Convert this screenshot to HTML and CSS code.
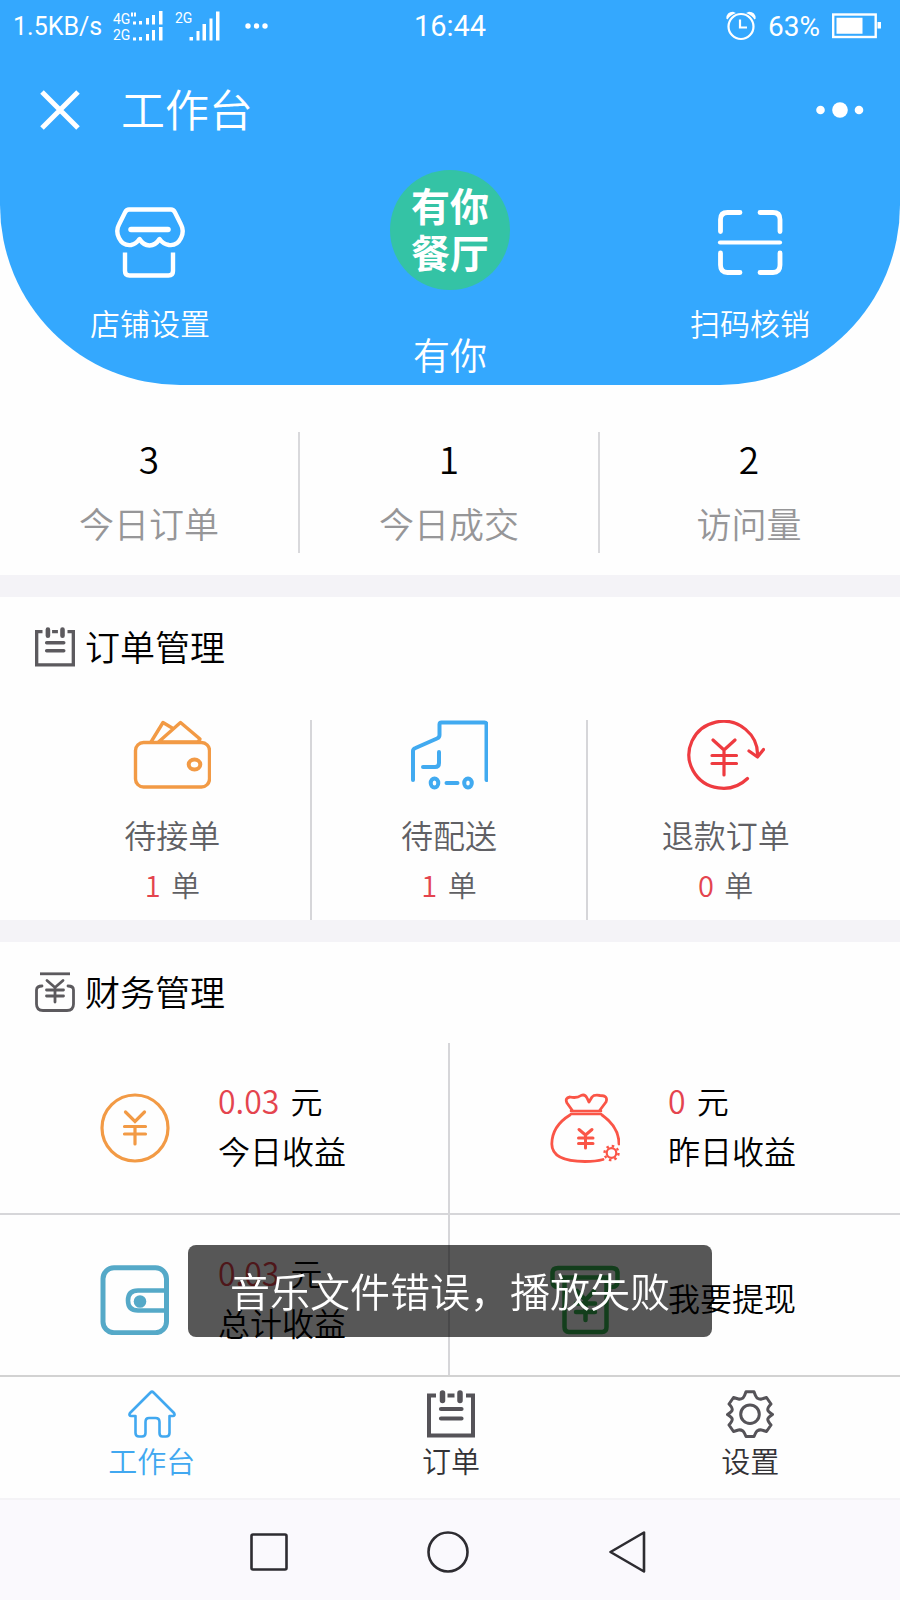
FILE: index.html
```html
<!DOCTYPE html>
<html lang="zh-CN">
<head>
<meta charset="utf-8">
<meta name="viewport" content="width=device-width, initial-scale=1">
<title>工作台</title>
<link rel="stylesheet" href="styles.css">
</head>
<body class="app">
<svg class="defs" width="0" height="0" aria-hidden="true">
  <symbol id="i-clipboard" viewBox="0 0 48 48">
    <g fill="none" stroke="currentColor" stroke-width="4">
      <path d="M9 5.500H2V45.500H46V5.500H39M20.500 5.500h7"/>
      <path d="M15.500 3v7.500M33 3v7.500" stroke-width="5.500" stroke-linecap="round"/>
      <path d="M14 19h20.500M14 28.500h20.500" stroke-width="4.200" stroke-linecap="round"/>
    </g>
  </symbol>
</svg>

<main class="page">
  <header class="hero">
    <div class="status">
      <div class="status-side">
        <span class="speed">1.5KB/s</span>
        <svg class="signal-dual" viewBox="0 0 50 32" aria-hidden="true">
          <g fill="#fff"><text class="net" x="0" y="14">4G</text><text class="net" x="0" y="30">2G</text>
          <path d="M20 11.500h3v3h-3zM26 11h3v3.500h-3zM33 8h3v6.500h-3zM39 5h3v9.500h-3zM46 1h3.500v13.500H46zM20 27.500h3v3h-3zM26 27h3v3.500h-3zM33 24h3v6.500h-3zM39 20h3v10.500h-3zM46 17h3.500v13.500H46zM18 2.500h2v4h-2zM21 2.500h2v4h-2z"/></g>
        </svg>
        <svg class="signal" viewBox="0 0 46 32" aria-hidden="true">
          <g fill="#fff"><text class="net" x="0" y="13">2G</text>
          <path d="M14.500 27h3.500v3.500h-3.500zM21.500 21h3v9.500h-3zM27.500 14h3.500v16.500h-3.500zM34.500 8.500h3v22h-3zM41 1.500h3.500v29H41z"/></g>
        </svg>
        <svg class="dots" viewBox="0 0 24 8" aria-hidden="true"><g fill="#fff"><circle cx="3" cy="4" r="2.700"/><circle cx="11.500" cy="4" r="2.700"/><circle cx="20" cy="4" r="2.700"/></g></svg>
      </div>
      <span class="clock">16:44</span>
      <div class="status-side status-right">
        <svg class="alarm" viewBox="0 0 30 30" aria-hidden="true">
          <g fill="none" stroke="#fff" stroke-width="2.200"><circle cx="15" cy="15.500" r="12.500"/><path d="M14 8.500v8h7"/></g>
          <path d="M.3 7.500Q.5 1 7 .8L10 2Q4 4 1.500 8.500zM29.700 7.500Q29.500 1 23 .8L20 2Q26 4 28.500 8.500z" fill="#fff"/>
        </svg>
        <span class="percent">63%</span>
        <svg class="battery" viewBox="0 0 50 26" aria-hidden="true">
          <rect x="1.200" y="1.500" width="42.500" height="22.500" fill="none" stroke="#fff" stroke-width="2.400"/>
          <path d="M4.500 4.700h26v16h-26zM45.500 9h3.500v6.500h-3.500z" fill="#fff"/>
        </svg>
      </div>
    </div>

    <div class="titlebar">
      <button class="icon-btn" type="button" aria-label="关闭">
        <svg class="close" viewBox="0 0 40 40"><path d="M2 2l36 36M38 2l-36 36" stroke="#fff" stroke-width="5" fill="none"/></svg>
      </button>
      <h1 class="title">工作台</h1>
      <button class="icon-btn more-btn" type="button" aria-label="更多">
        <svg class="more" viewBox="0 0 48 16"><g fill="#fff"><circle cx="4.500" cy="8" r="4.300"/><circle cx="24" cy="8" r="7.800"/><circle cx="43" cy="8" r="4.300"/></g></svg>
      </button>
    </div>

    <div class="hero-row">
      <a class="hero-link" href="#shop">
        <svg class="hero-icon" viewBox="0 0 74 74" fill="none" stroke="#fff" stroke-width="4.400" stroke-linecap="round" stroke-linejoin="round">
          <path d="M16 4.500H58Q60.500 4.500 62 7.500L68 19.500Q71.500 26 68 33Q64 41 56 40Q50 39 46.500 34Q42.500 40.500 36.500 40.500Q30.500 40.500 26.500 34Q23 39 18 40Q10 41 6 33Q2.500 26 6 19.500L12 7.500Q13.500 4.500 16 4.500Z"/>
          <path d="M18 24.500H55" stroke-width="5.500"/>
          <path d="M12 47.500V66Q12 70.500 16.500 70.500H55.500Q60 70.500 60 66V47.500" stroke-linecap="butt"/>
        </svg>
        <span class="hero-label">店铺设置</span>
      </a>
      <div class="shop">
        <div class="avatar">有你<br>餐厅</div>
        <div class="shop-name">有你</div>
      </div>
      <a class="hero-link" href="#scan">
        <svg class="hero-icon" viewBox="0 0 74 74" fill="none" stroke="#fff" stroke-width="4.800" stroke-linecap="round" stroke-linejoin="round">
          <path d="M7.500 26.500V14.500Q7.500 7.500 14.500 7.500H27M47 7.500H60Q67 7.500 67 14.500V26.500M7.500 48V60Q7.500 67.500 14.500 67.500H27M47 67.500H60Q67 67.500 67 60V48"/>
          <path d="M7 37.500H67" stroke-width="4.200"/>
        </svg>
        <span class="hero-label">扫码核销</span>
      </a>
    </div>
  </header>

  <section class="stats">
    <div class="stat"><span class="stat-num">3</span><span class="stat-label">今日订单</span></div>
    <div class="stat"><span class="stat-num">1</span><span class="stat-label">今日成交</span></div>
    <div class="stat"><span class="stat-num">2</span><span class="stat-label">访问量</span></div>
  </section>

  <section class="block">
    <h2 class="block-title"><svg class="block-icon"><use href="#i-clipboard"/></svg>订单管理</h2>
    <div class="orders">
      <a class="order" href="#accept">
        <svg class="order-icon" viewBox="0 0 78 70" fill="none" stroke="#f29a45" stroke-width="3.400" stroke-linejoin="round">
          <rect x="2.500" y="22.500" width="74" height="44.500" rx="8"/>
          <path d="M18 22L30 2.500L40 8.500M25.500 22L47.500 2.500L67 19L65 22M25.500 22H65"/>
          <ellipse cx="61.500" cy="44.500" rx="5.800" ry="5" stroke-width="4"/>
        </svg>
        <span class="order-label">待接单</span>
        <span class="order-count"><b class="num">1</b> 单</span>
      </a>
      <a class="order" href="#delivery">
        <svg class="order-icon" viewBox="0 0 78 70" fill="none" stroke="#41aaf0" stroke-width="4" stroke-linejoin="round" stroke-linecap="round">
          <path d="M3 60V31Q3 29 5.500 28L27 18.500Q29.500 17.500 29.500 15V4.500Q29.500 2.500 31.500 2.500H74.500Q76.500 2.500 76.500 4.500V60"/>
          <path d="M29 32V43Q29 47 25 47H13M36.500 63H47.500"/>
          <ellipse cx="24.500" cy="63" rx="3.800" ry="4.500"/><ellipse cx="58" cy="63" rx="3.800" ry="4.500"/>
        </svg>
        <span class="order-label">待配送</span>
        <span class="order-count"><b class="num">1</b> 单</span>
      </a>
      <a class="order" href="#refund">
        <svg class="order-icon" viewBox="0 0 78 70" fill="none" stroke="#ee3b40" stroke-width="3.200" stroke-linecap="round" stroke-linejoin="round">
          <path d="M60.500 58.500A34.300 33.500 0 1 1 70.500 37M62 31L70.500 37L76.500 29.500"/>
          <path d="M26 20L37 30L48 20M37 30V55M25 35.500H49.500M25 43.500H49.500"/>
        </svg>
        <span class="order-label">退款订单</span>
        <span class="order-count"><b class="num">0</b> 单</span>
      </a>
    </div>
  </section>

  <section class="block">
    <h2 class="block-title">
      <svg class="block-icon" viewBox="0 0 40 40" fill="none" stroke="#5c5a5e" stroke-width="2.800" stroke-linecap="round">
        <path d="M5 1.800H35" stroke-linecap="butt"/>
        <path d="M7 14Q1.500 14 1.500 18V32Q1.500 38.500 8 38.500H32Q38.500 38.500 38.500 32V18Q38.500 14 33 14"/>
        <path d="M12 8.500L20 15.500L28 8.500M20 15.500V30M11.500 18H28.500M11.500 24H28.500"/>
      </svg>财务管理</h2>
    <div class="finance">
      <a class="fin" href="#today">
        <svg class="fin-icon" viewBox="0 0 70 70" fill="none" stroke="#f29a45" stroke-width="3.200" stroke-linecap="round">
          <circle cx="35" cy="35" r="33"/>
          <path d="M25.500 19L35 28.500L44.500 19M24.500 33.500H45.500M24.500 41H45.500M35 33.500V51"/>
        </svg>
        <span class="fin-text"><span class="fin-line"><b class="num">0.03</b> 元</span><span class="fin-line">今日收益</span></span>
      </a>
      <a class="fin" href="#yesterday">
        <svg class="fin-icon" viewBox="0 0 70 70" fill="none" stroke="#fa5547" stroke-width="2.800" stroke-linejoin="round" stroke-linecap="round">
          <path d="M22 17L17 10Q14.500 5 20 4Q27 5.500 31 2.500Q35 .8 37 5L39 9L42 4Q44 1.500 50 2.500Q58.500 2.500 56 9L50 17"/>
          <path d="M21 18H51M21 21H51" stroke-width="2.600"/>
          <path d="M20 22Q2 33 1.800 51Q2 68.500 35 68.500Q46 68.500 53 66.500M52 22Q69 34 69 51"/>
          <path d="M29 36.500L35.500 42L42 36.500M28.500 45H43M28.500 50.500H43M35.500 42V55" stroke-width="3"/>
          <circle cx="61.500" cy="60" r="4.800" stroke-width="2.200"/>
          <circle cx="61.500" cy="60" r="7" stroke-width="2.400" stroke-dasharray="2.500 3" stroke-linecap="butt"/>
        </svg>
        <span class="fin-text"><span class="fin-line"><b class="num">0</b> 元</span><span class="fin-line">昨日收益</span></span>
      </a>
      <a class="fin" href="#total">
        <svg class="fin-icon" viewBox="0 0 70 70" fill="none" stroke="#55a9c8" stroke-width="5">
          <rect x="3" y="2.700" width="63.500" height="65" rx="11"/>
          <path d="M66 25.500H38Q28 25.500 28 35.500Q28 45.500 38 45.500H66" stroke-width="4.600"/>
          <circle cx="40" cy="36.500" r="6.300" fill="#55a9c8" stroke="none"/>
        </svg>
        <span class="fin-text"><span class="fin-line"><b class="num">0.03</b> 元</span><span class="fin-line">总计收益</span></span>
      </a>
      <a class="fin" href="#withdraw">
        <svg class="fin-icon" viewBox="0 0 70 70" fill="none" stroke="#38b553" stroke-width="4.500" stroke-linejoin="round" stroke-linecap="round">
          <path d="M8 22Q2.500 22 2.500 16V8Q2.500 3 8 3H62Q67.500 3 67.500 8V16Q67.500 22 62 22"/>
          <path d="M12 12.500H58"/><path d="M14.500 13V62Q14.500 67 19 67H52Q56.500 67 56.500 62V13"/>
          <path d="M27 26L35.500 35L44 26M26 38.500H45M26 47H45M35.500 35V55"/>
        </svg>
        <span class="fin-text"><span class="fin-line">我要提现</span></span>
      </a>
    </div>
  </section>
</main>

<div class="toast" role="status">音乐文件错误，播放失败</div>

<nav class="tabs">
  <a class="tab tab-active" href="#home">
    <svg class="tab-icon" viewBox="0 0 48 48" fill="none" stroke="currentColor" stroke-width="2.600" stroke-linejoin="round">
      <path d="M22.500 2.500Q24 1 25.500 2.500L46 23Q47.500 25.500 45 26H41.500V43Q41.500 46.500 38 46.500H34.500Q31.500 46.500 31.500 43V32Q31.500 28 27.500 28H21Q17.500 28 17.500 32V43Q17.500 46.500 14 46.500H11Q7.500 46.500 7.500 43V26H3Q.5 25.500 2 23Z"/>
    </svg>
    <span>工作台</span>
  </a>
  <a class="tab" href="#orders">
    <svg class="tab-icon"><use href="#i-clipboard"/></svg>
    <span>订单</span>
  </a>
  <a class="tab" href="#settings">
    <svg class="tab-icon" viewBox="0 0 48 48" fill="none" stroke="currentColor" stroke-width="3" stroke-linejoin="round">
      <path d="M20 1.800H28Q29.500 6.500 31 8Q33.500 9.500 35.500 9L40.500 7.500L45 14Q41.500 17.500 41.800 20Q42 21.500 46.500 24.500Q42 27.500 41.800 29Q41.500 31 45 35L40.500 41.500L35.500 40Q33.500 39.500 31 41Q29.500 42.500 28 46.500H20Q18.500 42.500 17 41Q14.500 39.500 12.500 40L7.500 41.500L3 35Q6.500 31 6.200 29Q6 27.500 1.500 24.500Q6 21.500 6.200 20Q6.500 17.500 3 14L7.500 7.500L12.500 9Q14.500 9.500 17 8Q18.500 6.500 20 1.800Z"/>
      <circle cx="24" cy="24.200" r="9.300"/>
    </svg>
    <span>设置</span>
  </a>
</nav>

<footer class="sysnav">
  <button class="icon-btn" type="button" aria-label="最近任务"><svg class="sys-icon" viewBox="0 0 42 42"><rect x="3.500" y="3.500" width="35" height="35" rx="1.500" fill="none" stroke="#2d2c31" stroke-width="2.600"/></svg></button>
  <button class="icon-btn" type="button" aria-label="主屏幕"><svg class="sys-icon" viewBox="0 0 42 42"><circle cx="21" cy="21" r="19.500" fill="none" stroke="#2d2c31" stroke-width="2.600"/></svg></button>
  <button class="icon-btn" type="button" aria-label="返回"><svg class="sys-icon" viewBox="0 0 42 42"><path d="M38 1.500V40.500L4.500 21Z" fill="none" stroke="#2d2c31" stroke-width="2.600" stroke-linejoin="round"/></svg></button>
</footer>
</body>
</html>
```

FILE: styles.css
```css
* {
  box-sizing: border-box;
}

.app {
  margin: 0;
  height: 100vh;
  display: flex;
  flex-direction: column;
  background: #fefefe;
  color: #000;
  font-family: "Noto Sans CJK SC", sans-serif;
  font-weight: 350;
}

.defs {
  position: absolute;
}

svg {
  display: block;
  flex: none;
}

a {
  color: inherit;
  text-decoration: none;
}

.icon-btn {
  margin: 0;
  padding: 0;
  border: 0;
  background: none;
}

.page {
  flex: 1;
  min-height: 0;
  overflow-y: auto;
  scrollbar-width: none;
}

/* Header */
.hero {
  padding-bottom: 9px;
  background: #34a8fe;
  color: #fff;
  border-radius: 0 0 180px 180px;
}

.status {
  display: grid;
  grid-template-columns: 1fr auto 1fr;
  align-items: center;
  height: 52px;
  padding: 0 18px 0 13px;
  font-family: Roboto, sans-serif;
  font-size: 28px;
  font-weight: 400;
}

.status-side {
  display: flex;
  align-items: center;
}

.status-right {
  justify-content: flex-end;
  gap: 12px;
}

.speed {
  width: 100px;
  font-size: 25px;
}

.clock {
  padding-left: 5px;
  font-size: 29px;
}

.net {
  font-size: 14px;
}

.signal-dual {
  width: 50px;
  height: 32px;
}

.signal {
  width: 46px;
  height: 32px;
  margin-left: 12px;
}

.dots {
  width: 24px;
  height: 8px;
  margin-left: 24px;
}

.alarm {
  width: 30px;
  height: 30px;
}

.battery {
  width: 50px;
  height: 26px;
}

.titlebar {
  display: flex;
  align-items: center;
  height: 116px;
  padding: 0 36px 0 40px;
}

.close {
  width: 40px;
  height: 40px;
}

.title {
  margin: 0 0 0 41px;
  padding-bottom: 4px;
  font-size: 44px;
  font-weight: inherit;
  line-height: 64px;
}

.more-btn {
  margin-left: auto;
}

.more {
  width: 48px;
  height: 16px;
}

.hero-row {
  display: grid;
  grid-template-columns: repeat(3, 1fr);
}

.hero-link,
.shop {
  display: flex;
  flex-direction: column;
  align-items: center;
}

.hero-link {
  padding-top: 37px;
}

.hero-icon {
  width: 74px;
  height: 74px;
}

.hero-label {
  margin-top: 21px;
  font-size: 30px;
  line-height: 44px;
}

.shop {
  padding-top: 2px;
}

.avatar {
  display: flex;
  align-items: center;
  justify-content: center;
  width: 120px;
  height: 120px;
  padding-bottom: 4px;
  border-radius: 50%;
  background: #34c3a5;
  font-size: 39px;
  font-weight: 700;
  line-height: 47px;
}

.shop-name {
  margin-top: 42px;
  font-size: 37px;
  line-height: 44px;
}

/* Daily figures */
.stats {
  display: grid;
  grid-template-columns: repeat(3, 1fr);
  padding: 47px 0 22px;
}

.stat {
  display: flex;
  flex-direction: column;
  align-items: center;
  height: 121px;
  border-right: 2px solid #d9d9dc;
}

.stat:last-child {
  border-right-color: transparent;
}

.stat-num {
  font-size: 37px;
  line-height: 52px;
}

.stat-label {
  margin-top: 15px;
  color: #969698;
  font-size: 35px;
  line-height: 48px;
}

/* Sections */
.block {
  border-top: 22px solid #f4f3f7;
}

.block-title {
  display: flex;
  align-items: center;
  gap: 10px;
  height: 101px;
  margin: 0;
  padding-left: 35px;
  font-size: 35px;
  font-weight: inherit;
  line-height: 98px;
}

.block-title {
  align-items: flex-start;
}

.block-icon {
  width: 40px;
  height: 40px;
  margin-top: 30px;
  color: #5c5a5e;
}

.num {
  color: #e4444e;
  font-weight: inherit;
}

.orders {
  display: grid;
  grid-template-columns: repeat(3, 1fr);
  padding: 22px 35px 0;
}

.order {
  display: flex;
  flex-direction: column;
  align-items: center;
  padding-bottom: 14px;
  border-right: 2px solid #d6d6d9;
  color: #606064;
}

.order:last-child {
  border-right-color: transparent;
}

.order-icon {
  width: 78px;
  height: 70px;
}

.order-label {
  margin-top: 22px;
  font-size: 32px;
  line-height: 44px;
}

.order-count {
  margin-top: 6px;
  font-size: 29px;
  line-height: 44px;
}

.order-count .num,
.fin-line .num {
  margin-right: 4px;
}

.finance {
  display: grid;
  grid-template-columns: repeat(2, 1fr);
}

.fin {
  display: flex;
  align-items: center;
  height: 172px;
  padding-left: 100px;
  border-bottom: 2px solid #d6d6d9;
}

.fin:nth-child(odd) {
  border-right: 2px solid #d6d6d9;
}

.fin-icon {
  width: 70px;
  height: 70px;
}

.fin-text {
  display: flex;
  flex-direction: column;
  margin-left: 48px;
  padding-bottom: 7px;
}

.fin-line {
  font-size: 32px;
  line-height: 50px;
}

/* Message over the page */
.toast {
  position: fixed;
  bottom: 263px;
  left: 50%;
  transform: translateX(-50%);
  padding: 15px 42px 17px;
  border-radius: 8px;
  background: rgba(0, 0, 0, 0.66);
  color: #fff;
  font-size: 40px;
  line-height: 60px;
  white-space: nowrap;
}

/* Bottom bars */
.tabs {
  display: grid;
  grid-template-columns: repeat(3, 1fr);
  padding: 13px 0 16px 2px;
  border-top: 2px solid #d2d2d2;
  background: #fefefe;
}

.tab {
  display: flex;
  flex-direction: column;
  align-items: center;
  color: #333236;
  font-size: 29px;
  line-height: 44px;
}

.tab-icon {
  width: 48px;
  height: 48px;
  color: #555358;
}

.tab-active,
.tab-active .tab-icon {
  color: #41a8f0;
}

.sysnav {
  display: flex;
  align-items: center;
  justify-content: center;
  gap: 137px;
  height: 102px;
  padding: 4px 4px 0 0;
  border-top: 2px solid #f4f3f6;
  background: #faf9fd;
}

.sys-icon {
  width: 42px;
  height: 42px;
}
```
